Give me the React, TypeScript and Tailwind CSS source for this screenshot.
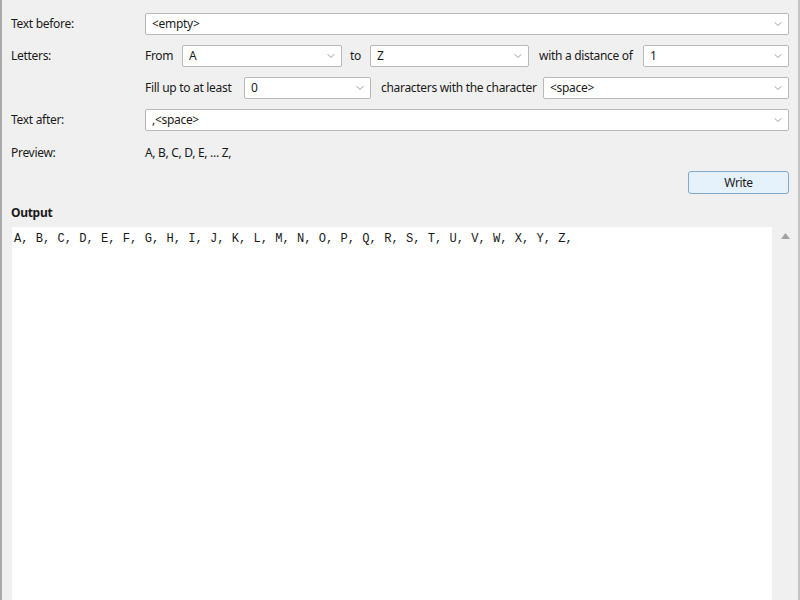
import { ChevronDown } from 'lucide-react';

const ui = { fontFamily: '"Noto Sans", "Open Sans", sans-serif' };

function Combo({ value, className = '' }: { value: string; className?: string }) {
  return (
    <div
      className={`flex h-[22px] shrink-0 items-center justify-between rounded-[2px] border border-[#b9b9b9] bg-white pl-[6px] pr-[4px] text-[12px] text-[#1a1a1a] ${className}`}
    >
      <span className="leading-none">{value}</span>
      <ChevronDown className="h-[12px] w-[12px] text-[#7a7a7a]" strokeWidth={1.5} />
    </div>
  );
}

const letters = 'ABCDEFGHIJKLMNOPQRSTUVWXYZ'.split('').map((c) => c + ',').join(' ');

export default function App() {
  return (
    <div
      style={ui}
      className="flex h-[600px] w-[800px] flex-col overflow-hidden border-l-2 border-r-2 border-l-[#a9a9a9] border-r-[#c4c4c4] bg-[#f0f0f0] text-[12px] tracking-[-0.3px] text-[#1a1a1a]"
    >
      <div className="flex flex-col gap-[10px] pl-[9px] pr-[9px] pt-[13px] whitespace-nowrap">
        {/* Text before */}
        <div className="flex items-center">
          <span className="w-[134px] shrink-0">Text before:</span>
          <Combo value="<empty>" className="flex-1" />
        </div>

        {/* Letters */}
        <div className="flex items-center">
          <span className="w-[134px] shrink-0">Letters:</span>
          <span className="w-[37px] shrink-0">From</span>
          <Combo value="A" className="w-[160px]" />
          <span className="ml-[8px] w-[20px] shrink-0">to</span>
          <Combo value="Z" className="w-[159px]" />
          <span className="ml-[10px] w-[104px] shrink-0">with a distance of</span>
          <Combo value="1" className="flex-1" />
        </div>

        {/* Fill */}
        <div className="flex items-center">
          <span className="w-[134px] shrink-0" />
          <span className="w-[99px] shrink-0">Fill up to at least</span>
          <Combo value="0" className="w-[127px]" />
          <span className="ml-[10px] w-[162px] shrink-0">characters with the character</span>
          <Combo value="<space>" className="flex-1" />
        </div>

        {/* Text after */}
        <div className="flex items-center">
          <span className="w-[134px] shrink-0">Text after:</span>
          <Combo value=",<space>" className="flex-1" />
        </div>

        {/* Preview */}
        <div className="mt-[3px] flex items-center">
          <span className="w-[134px] shrink-0">Preview:</span>
          <span>A, B, C, D, E, ... Z,</span>
        </div>
      </div>

      <div className="flex justify-end pr-[9px] pt-[9px]">
        <button className="h-[23px] w-[101px] rounded-[3px] border border-[#7fa8c9] bg-[#e5f1fb] text-[12px] text-[#1a1a1a]">
          Write
        </button>
      </div>

      <div className="pl-[9px] pt-[11px] text-[12px] font-bold leading-[16px]">Output</div>

      <div className="mt-[6px] flex flex-1 pl-[10px]">
        <div
          className="flex-1 bg-white pl-[2px] pt-[3px] text-[12.1px] tracking-normal text-[#1a1a1a]"
          style={{ fontFamily: '"Liberation Mono", "DejaVu Sans Mono", monospace' }}
        >
          {letters}
        </div>
        <div className="flex w-[26px] justify-center bg-[#f0f0f0] pt-[6px]">
          <svg width="9" height="6" viewBox="0 0 9 6">
            <path d="M0 6 L4.5 0 L9 6 Z" fill="#a3a3a3" />
          </svg>
        </div>
      </div>
    </div>
  );
}
